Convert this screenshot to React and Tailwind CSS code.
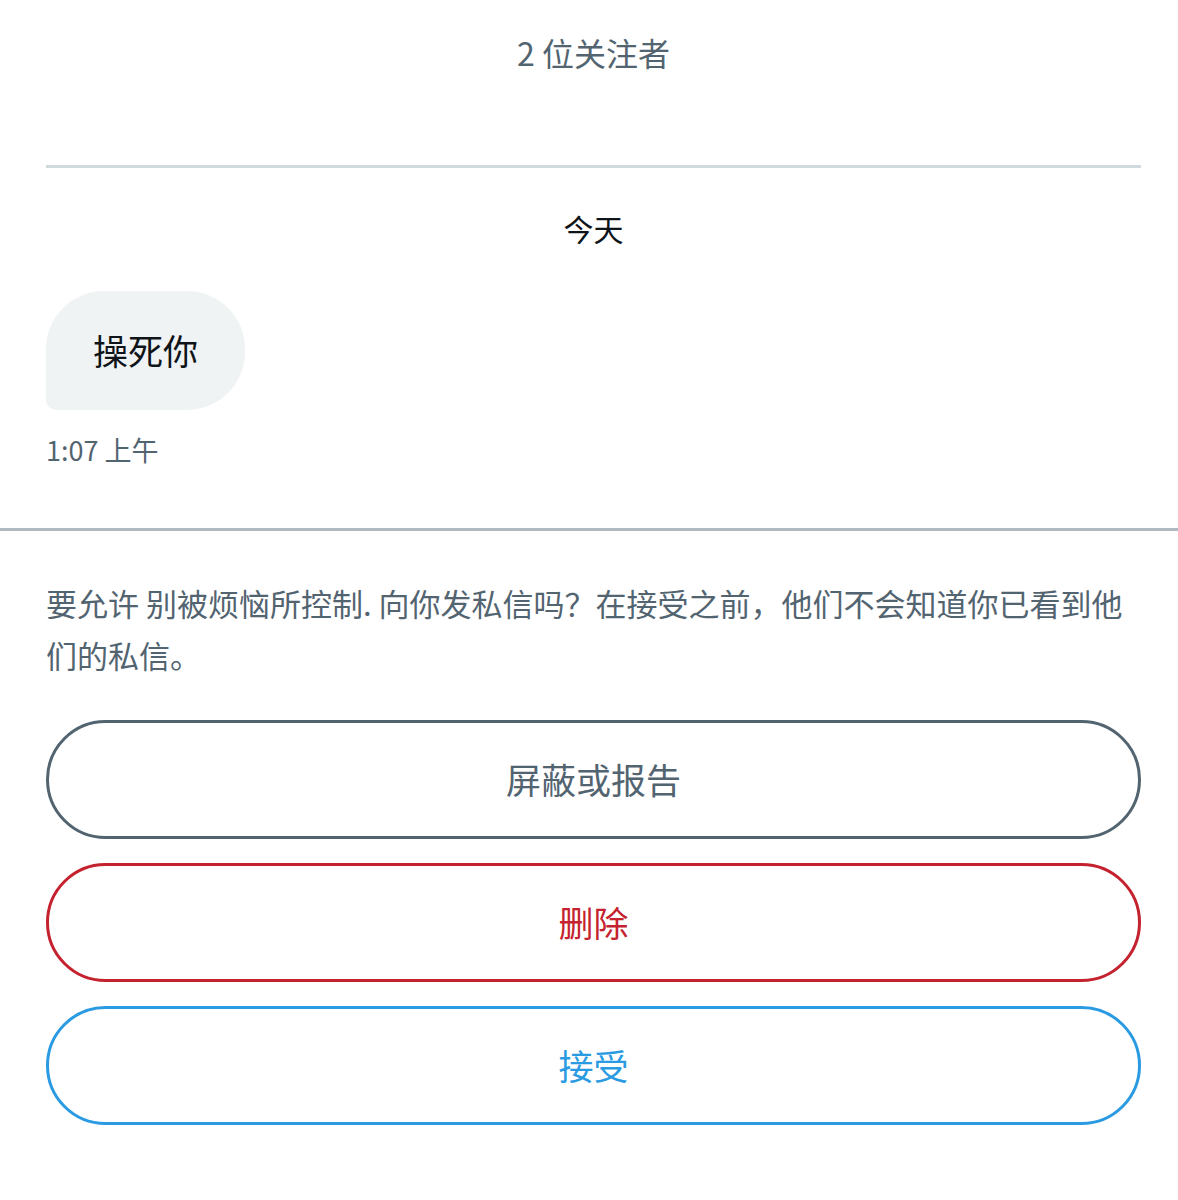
import React from 'react';

const font = { fontFamily: '"Noto Sans CJK SC", "Noto Sans", sans-serif' };

const ActionButton = ({ label, tone }) => {
  const tones = {
    gray: "border-[#536471] text-[#536471]",
    red: "border-[#c4222e] text-[#c4222e]",
    blue: "border-[#2a9be2] text-[#2a9be2]",
  };
  return (
    <button
      className={`w-full h-[119px] rounded-full border-[3px] bg-white flex items-center justify-center text-[35px] ${tones[tone]}`}
    >
      {label}
    </button>
  );
};

const App = () => {
  return (
    <div className="min-h-[1200px] bg-white" style={font}>
      {/* Thread */}
      <div className="pl-[46px] pr-[37px]">
        <div className="h-[104px] flex items-center justify-center text-[32px] text-[#536471]">
          2 位关注者
        </div>
        <div className="h-[61px]" />
        <div className="h-[3px] bg-[#d0d9dd]" />

        <div className="h-[120px] flex items-center justify-center text-[30px] text-[#0f1419]">
          今天
        </div>

        <div className="mt-[3px] flex">
          <div className="h-[119px] px-[47px] flex items-center rounded-[58px] rounded-bl-[10px] bg-[#eff3f4] text-[35px] text-[#0f1419]">
            操死你
          </div>
        </div>
        <div className="mt-[25px] h-[30px] leading-[30px] text-[27px] text-[#536471]">
          1:07 上午
        </div>
        <div className="h-[63px]" />
      </div>

      <div className="h-[3px] bg-[#aeb9c1]" />

      {/* Message request */}
      <div className="pl-[46px] pr-[37px] pt-[46px]">
        <p className="text-[31px] leading-[52px] text-[#536471]">
          要允许 别被烦恼所控制. 向你发私信吗？在接受之前，他们不会知道你已看到他们的私信。
        </p>
        <div className="mt-[39px] flex flex-col gap-[24px]">
          <ActionButton label="屏蔽或报告" tone="gray" />
          <ActionButton label="删除" tone="red" />
          <ActionButton label="接受" tone="blue" />
        </div>
      </div>
    </div>
  );
};

export default App;
